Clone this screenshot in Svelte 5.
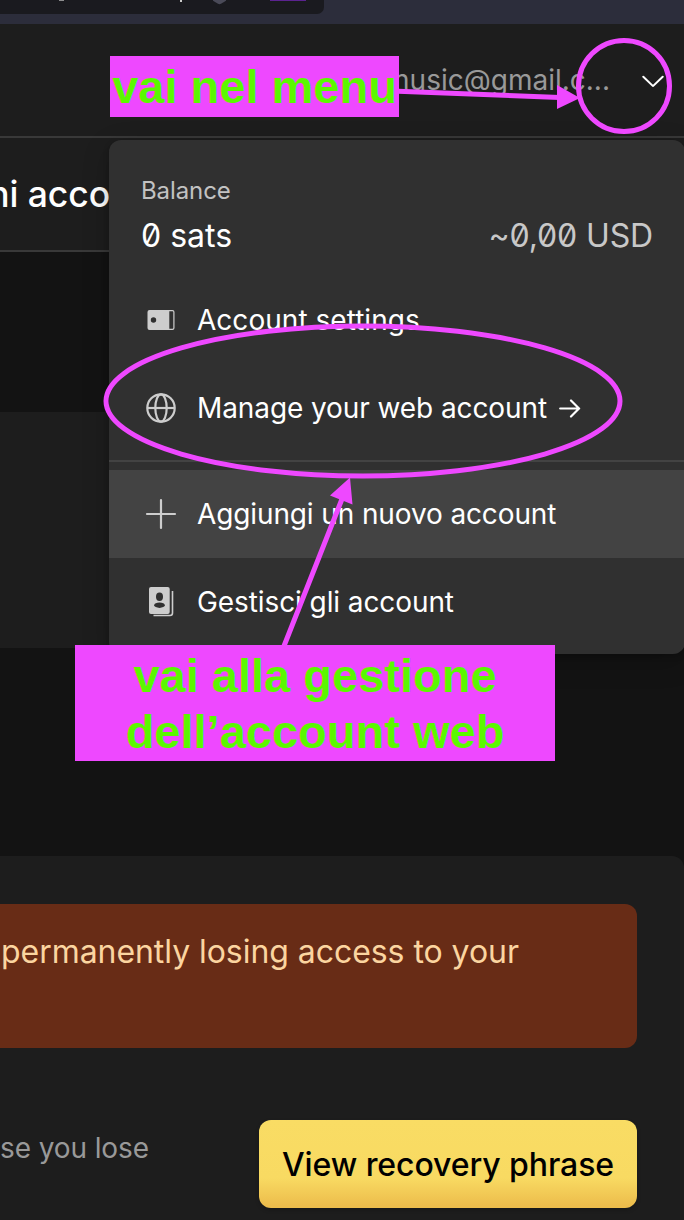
<script>
  const menuItems = [
    { icon: 'wallet', label: 'Account settings' },
    { icon: 'globe', label: 'Manage your web account', arrow: true },
    { divider: true },
    { icon: 'plus', label: 'Aggiungi un nuovo account', active: true },
    { icon: 'contacts', label: 'Gestisci gli account' }
  ];
</script>

<div class="page">
  <div class="browser">
    <div class="toolbar">
      <svg width="324" height="14" viewBox="0 0 324 14">
        <path d="M59 0h5v.8h-5z" fill="#aaa" />
        <path d="M180 0h2v2h-2z" fill="#ccc" />
        <path d="M213 0h13v.8l-5 3q-1.500.8-3 0l-5-3z" fill="#4a4a58" />
        <path d="M270 0h36v1h-36z" fill="#5b2390" />
      </svg>
    </div>
  </div>

  <header>
    <span class="email">music@gmail.c...</span>
    <svg class="chevron" width="22" height="14" viewBox="0 0 22 14">
      <path d="M1.300 1.800 10.500 10.600q.500.500 1 0l9.200-8.800" />
    </svg>
  </header>

  <div class="heading"><h1>ni acco</h1></div>

  <main>
    <section class="panel"></section>
    <section class="card">
      <div class="warning">permanently losing access to your</div>
      <div class="recovery">
        <p>se you lose</p>
        <button>View recovery phrase</button>
      </div>
    </section>
  </main>

  <nav class="menu">
    <div class="balance">
      <span class="caption">Balance</span>
      <div class="amounts"><span class="sats">0 sats</span><span class="fiat">~0,00 USD</span></div>
    </div>
    {#each menuItems as item}
      {#if item.divider}
        <div class="divider"></div>
      {:else}
        <div class="item" class:active={item.active}>
          <svg width="32" height="32" viewBox="0 0 32 32">
            {#if item.icon === 'wallet'}
              <path fill-rule="evenodd" fill="#cdcdcd" d="M4.500 6h23a2 2 0 0 1 2 2v16a2 2 0 0 1-2 2h-23a2 2 0 0 1-2-2V8a2 2 0 0 1 2-2zM8.500 13.300a2.700 2.700 0 1 0 0 5.400 2.700 2.700 0 0 0 0-5.400zM24.300 7.300v17.400h3.200q.8 0 .8-.8V8.100q0-.8-.8-.8z" />
            {:else if item.icon === 'globe'}
              <g fill="none" stroke="#cdcdcd" stroke-width="2.200">
                <circle cx="16" cy="16" r="13.700" />
                <ellipse cx="16" cy="16" rx="5.700" ry="13.700" />
                <path d="M2 16h28" />
              </g>
            {:else if item.icon === 'plus'}
              <path d="M16 2v28M2 16h28" fill="none" stroke="#cdcdcd" stroke-width="2.200" stroke-linecap="round" />
            {:else}
              <path d="M27.500 5v22q0 2.500-2.500 2.500H8.500" fill="none" stroke="#cdcdcd" stroke-width="1.600" />
              <rect x="4" y="1" width="20.700" height="27" rx="2" fill="#cdcdcd" />
              <ellipse cx="14.500" cy="10.800" rx="3.500" ry="4.200" fill="#303030" />
              <ellipse cx="14.500" cy="19.200" rx="5.300" ry="2.700" fill="#303030" />
            {/if}
          </svg>
          <span class="label">{item.label}</span>
          {#if item.arrow}
            <svg class="go" width="22" height="20" viewBox="0 0 22 20">
              <path d="M1.200 10.500h19M12 2.500l8 8-8 8" />
            </svg>
          {/if}
        </div>
      {/if}
    {/each}
  </nav>

  <svg class="marks" width="684" height="1220" viewBox="0 0 684 1220">
    <g fill="none" stroke="#ee48ff" stroke-width="5">
      <circle cx="624" cy="86" r="45.500" />
      <ellipse cx="363" cy="401" rx="257" ry="75" />
      <path d="M398 91.300 560 97.500M284 646l58-147" />
    </g>
    <path d="M557 85v24L580 98zM350 477.500l-20 18 22.500 9z" fill="#ee48ff" />
  </svg>
  <div class="note first"><span>vai nel menu</span></div>
  <div class="note second"><span>vai alla gestione</span><span>dell’account web</span></div>
</div>

<style>
  :global(body) { background: #131313; }
  .page {
    position: relative;
    width: 684px;
    height: 1220px;
    overflow: hidden;
    background: #131313;
    color: #fff;
    font-family: Inter, sans-serif;
    white-space: nowrap;
  }
  .page * { box-sizing: border-box; }
  .browser { height: 24px; background: #2c2d3b; }
  .toolbar { width: 324px; height: 14px; background: #1a1a1f; border-radius: 0 0 7px 0; }
  .toolbar svg { display: block; }
  header {
    display: flex;
    align-items: center;
    justify-content: flex-end;
    height: 114px;
    padding-right: 20px;
    background: #1d1d1d;
    border-bottom: 2px solid #393939;
  }
  .email { font-size: 28px; color: #999; }
  .chevron { margin: 3px 0 0 32px; }
  .chevron path { fill: none; stroke: #fff; stroke-width: 2; stroke-linecap: round; }
  .heading {
    display: flex;
    align-items: center;
    height: 114px;
    background: #1d1d1d;
    border-bottom: 2px solid #393939;
  }
  h1 {
    display: flex;
    justify-content: flex-end;
    width: 110px;
    margin: 0;
    font-size: 35.5px;
    letter-spacing: -0.1px;
    font-weight: 500;
    white-space: pre;
  }
  .panel { height: 236px; margin-top: 160px; background: #1d1d1d; }
  .card {
    height: 364px;
    margin-top: 208px;
    padding: 48px 47px 0 0;
    background: #1d1d1d;
    border-radius: 0 12px 0 0;
  }
  .warning {
    height: 144px;
    padding: 24px 0 0 1px;
    background: #682c16;
    border-radius: 0 12px 12px 0;
    color: #fbd5a0;
    font-size: 32px;
    letter-spacing: -0.05px;
    line-height: 48px;
  }
  .recovery {
    display: flex;
    justify-content: space-between;
    margin-top: 72px;
  }
  p { margin: 8px 0 0; font-size: 28px; letter-spacing: -0.1px; line-height: 41px; color: #999; }
  button {
    width: 378px;
    height: 88px;
    padding: 0;
    border: 0;
    border-radius: 12px;
    background: linear-gradient(#f9dc64 0%, #f8da62 66%, #edbd4c 97%);
    box-shadow: 0 2px 4px #0003;
    color: #000;
    font: 500 32px Inter, sans-serif;
    letter-spacing: -0.08px;
  }
  .menu {
    position: absolute;
    left: 109px;
    top: 140px;
    width: 576px;
    height: 514px;
    background: #303030;
    border-radius: 12px;
    box-shadow: 0 8px 28px #0003, 0 2px 6px #0003;
  }
  .balance { height: 136px; padding: 35px 32px 0; }
  .caption { display: block; font-size: 24px; letter-spacing: -0.1px; line-height: 32px; color: #c2c2c2; }
  .amounts {
    display: flex;
    justify-content: space-between;
    margin-top: 5px;
    font-size: 32px;
    line-height: 48px;
    font-feature-settings: 'zero' 1;
  }
  .fiat { color: #c8c8c8; font-weight: 400; letter-spacing: -0.15px; }
  .item { display: flex; align-items: center; height: 88px; padding-left: 36px; }
  .active { background: #434343; }
  .label { margin-left: 20px; font-size: 28px; letter-spacing: -0.09px; }
  .item:nth-child(2) .label { letter-spacing: 0.03px; }
  .item:nth-child(5) .label { letter-spacing: -0.12px; }
  .go { margin-left: 12px; }
  .go path { fill: none; stroke: #fff; stroke-width: 2.200; stroke-linecap: round; stroke-linejoin: round; }
  .divider { height: 18px; padding-top: 8px; }
  .divider::before { content: ''; display: block; height: 2px; background: #434343; }
  .marks { position: absolute; inset: 0; }
  .note {
    position: absolute;
    display: flex;
    flex-direction: column;
    align-items: center;
    background: #ee48ff;
    color: #5bf800;
    font: bold 47px/56px "Liberation Sans", Arial, sans-serif;
  }
  .first { left: 110px; top: 56px; width: 289px; height: 61px; padding-top: 3px; }
  .second { left: 75px; top: 645px; width: 480px; height: 116px; padding-top: 3px; }
</style>
